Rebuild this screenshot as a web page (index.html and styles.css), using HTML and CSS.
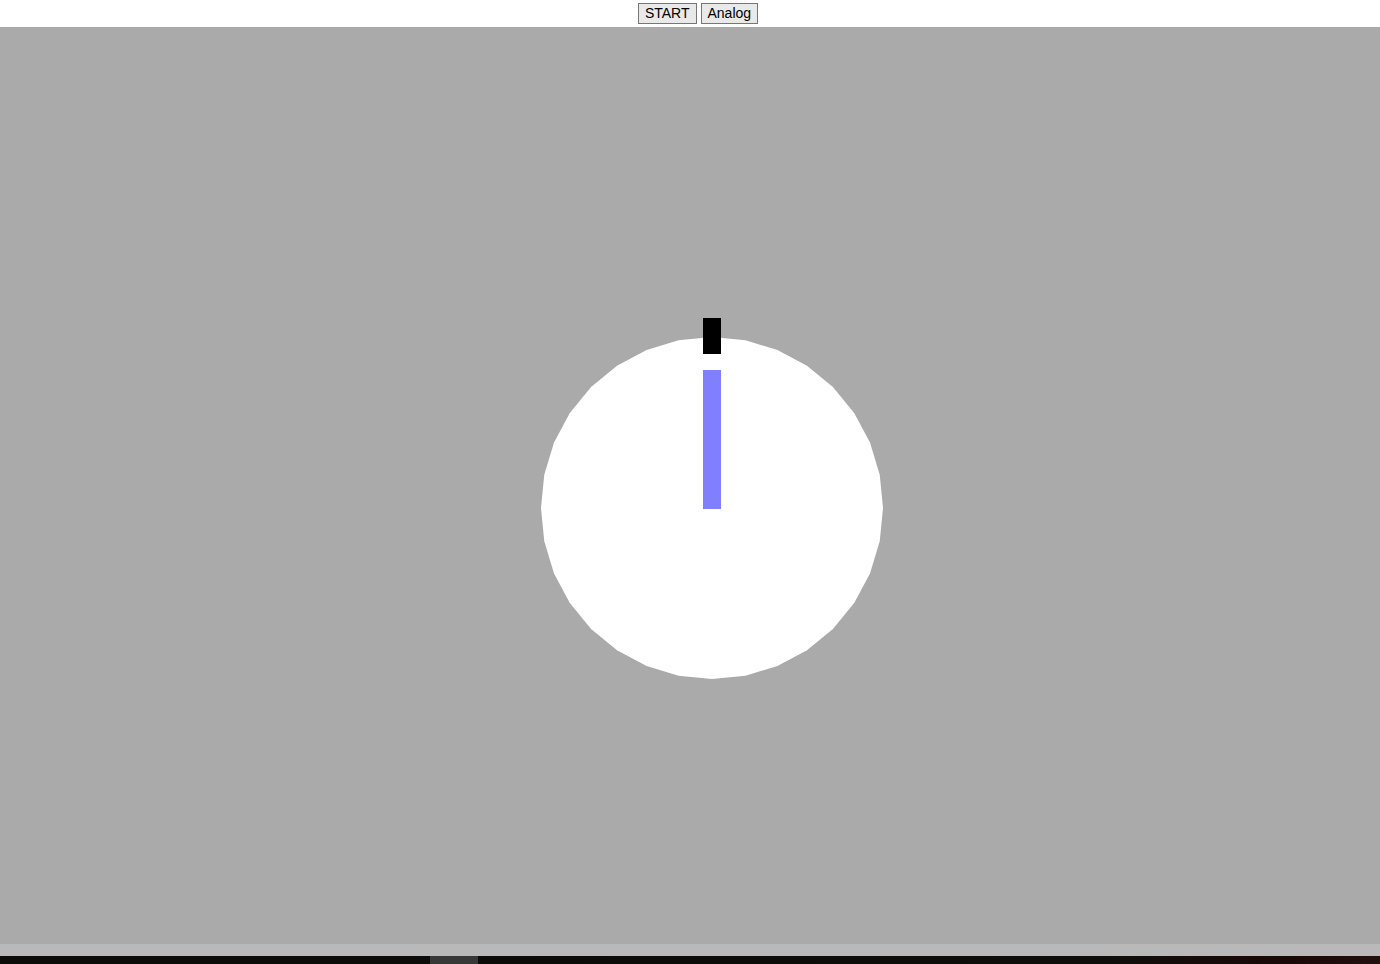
FILE: index.html
```html
<!DOCTYPE html>
<html>
<head>
<meta charset="utf-8">
<link rel="stylesheet" href="styles.css">
</head>
<body>
<div class="toolbar">
  <button class="btn">START</button>
  <button class="btn">Analog</button>
</div>
<div class="stage">
  <svg class="clock" width="1380" height="917" viewBox="0 0 1380 917">
    <polygon fill="#ffffff" points="883,481 879.72,514.36 869.98,546.44 854.18,576 832.92,601.92 807,623.18 777.44,638.98 745.36,648.72 712,652 678.64,648.72 646.56,638.98 617,623.18 591.08,601.92 569.82,576 554.02,546.44 544.28,514.36 541,481 544.28,447.64 554.02,415.56 569.82,386 591.08,360.08 617,338.82 646.56,323.02 678.64,313.28 712,310 745.36,313.28 777.44,323.02 807,338.82 832.92,360.08 854.18,386 869.98,415.56 879.72,447.64"/>
    <rect x="703" y="291" width="18" height="36" fill="#000000"/>
    <rect x="703" y="343" width="18" height="139" fill="#8080ff"/>
  </svg>
</div>
<div class="band"></div>
<div class="strip">
  <div class="strip-dark strip-a"></div>
  <div class="strip-mid"></div>
  <div class="strip-dark strip-b"></div>
</div>
</body>
</html>
```
FILE: styles.css
```css
html, body {
  margin: 0;
  padding: 0;
  background: #ffffff;
  overflow: hidden;
}
.toolbar {
  height: 27px;
  display: flex;
  justify-content: center;
  align-items: flex-start;
  gap: 4px;
  padding-left: 16px;
  box-sizing: border-box;
  padding-top: 3px;
}
.btn {
  font-family: "Liberation Sans", Arial, sans-serif;
  font-size: 14px;
  height: 21px;
  padding: 0 6px;
  margin: 0;
  border: 1px solid #767676;
  background: #e9e9e9;
  color: #000;
  line-height: 19px;
  border-radius: 0;
}
.stage {
  height: 917px;
  background: #aaaaaa;
}
.clock {
  display: block;
}
.band {
  height: 12px;
  background: #b9b9b9;
}
.strip {
  height: 8px;
  display: flex;
}
.strip-dark {
  background: #0e0c0a;
}
.strip-a {
  width: 430px;
}
.strip-mid {
  width: 48px;
  background: #383838;
}
.strip-b {
  flex: 1;
  background: linear-gradient(90deg, #0c0b0a 0%, #100e0c 70%, #1a0808 90%, #221010 100%);
}
```
